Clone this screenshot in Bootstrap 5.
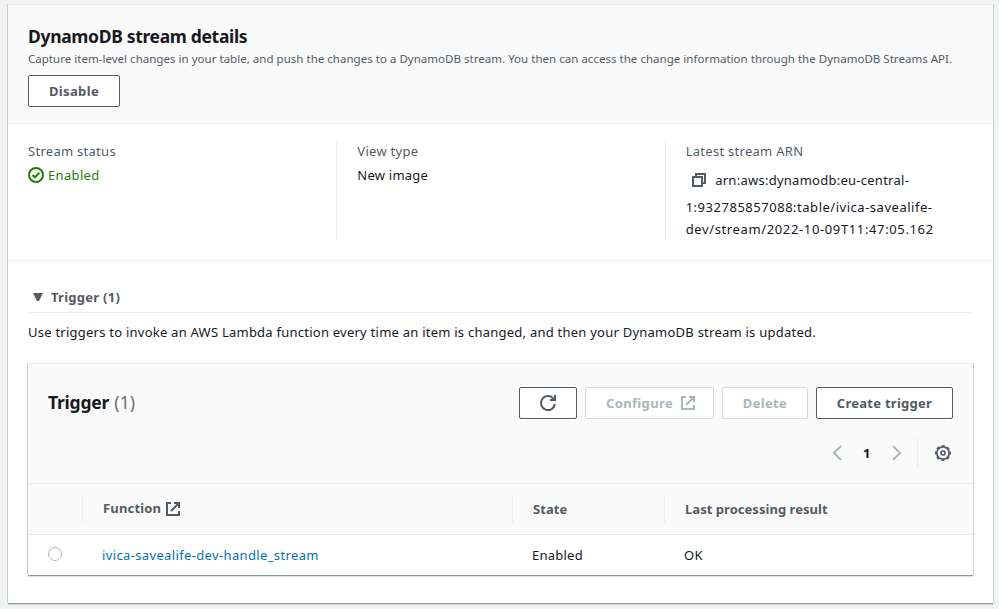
<!DOCTYPE html>
<html lang="en">
<head>
<meta charset="utf-8">
<meta name="viewport" content="width=device-width, initial-scale=1">
<title>DynamoDB stream details</title>
<link href="https://cdn.jsdelivr.net/npm/bootstrap@5.3.0/dist/css/bootstrap.min.css" rel="stylesheet">
<style>
body{background:#f2f3f3;color:#16191f;font-family:"Noto Sans","Open Sans",sans-serif;font-size:13px;line-height:22px;letter-spacing:.24px;padding:4px 6px 5px 8px}
.panel{background:#fff;border-top:1px solid #eaeded;box-shadow:0 1px 0 0 #8d999b,1px 0 0 0 #cdd3d4,-1px 0 0 0 #c9cfd0,0 2px 1px 0 rgba(0,28,36,.12)}
.outer-panel{height:599px}
.panel-head{background:#fafafa;border-bottom:1px solid #eaeded}
.stream-head{height:119px;padding:20px 20px 0}
.title{font-size:17.5px;line-height:22px;font-weight:700;letter-spacing:-.33px;margin:0}
.title .count{font-weight:400;color:#687078;letter-spacing:.1px;margin-left:1px}
.desc{font-size:11.5px;line-height:18px;letter-spacing:.025px;color:#545b64;padding-top:3px;margin-bottom:7px;white-space:nowrap}
.btn-aws{--bs-btn-font-size:13px;--bs-btn-line-height:20px;--bs-btn-font-weight:700;--bs-btn-padding-x:0;--bs-btn-padding-y:5px;--bs-btn-border-radius:2px;--bs-btn-color:#545b64;--bs-btn-bg:#fff;--bs-btn-border-color:#545b64;--bs-btn-hover-color:#16191f;--bs-btn-hover-bg:#fafafa;--bs-btn-hover-border-color:#16191f;--bs-btn-disabled-color:#aab7b8;--bs-btn-disabled-bg:#fff;--bs-btn-disabled-border-color:#d5dbdb;--bs-btn-disabled-opacity:1;height:32px;letter-spacing:.36px}
.w-disable{width:92px}.w-refresh{width:58px}.w-config{width:129px}.w-delete{width:86px}.w-create{width:137px}
.w-create{letter-spacing:.27px}
.w-config{padding-left:2px}
.facts{height:137px;padding:16px 0 20px;border-bottom:1px solid #eaeded}
.fact{padding:0 20px}
.fact + .fact{border-left:1px solid #eaeded}
.fact-label{color:#545b64;letter-spacing:.28px}
.ok-text{color:#1d8102;letter-spacing:.34px}
.fact-value{margin-top:2px}
.arn-line{line-height:32px;margin-top:2px;padding-left:6px}
.arn-a{letter-spacing:.26px;padding-left:1.5px}.arn-b{letter-spacing:.52px}.arn-c{letter-spacing:.63px}
.trigger-area{padding:25px 20px 0}
.expander{height:27px;padding-left:5px;color:#545b64;font-weight:700;border-bottom:1px solid #eaeded;letter-spacing:.27px}
.caret{margin-top:7px}
.hint{margin:8px 0 20px}
.inner-panel{height:212px}
.tool-head{height:120px;padding:23px 20px 0}
.tool-head .title{padding-bottom:2px;letter-spacing:-.24px}
.pager{height:30px;margin-top:19px;padding-right:2px}
.pager .page-now{font-weight:700;color:#16191f;width:8px;margin:0 21px 0 21px}
.gear-wrap{height:30px;border-left:1px solid #eaeded;padding-left:17px;margin-left:15px}
.fn-table{--bs-table-bg:transparent;table-layout:fixed;color:#16191f}
.fn-table th,.fn-table td{padding:0;border:0;vertical-align:middle}
.fn-table th{height:50px;background:#fafafa;color:#545b64;letter-spacing:.04px}
.fn-table thead tr{border-bottom:1px solid #eaeded}
.fn-table td{height:40px;padding:2px 0 0 20px}
.fn-table th > div{height:26px;line-height:27px;padding-left:20px;border-left:1px solid #eaeded}
.fn-table th:first-child > div{border:0}
.fn-table .fn-head{letter-spacing:.17px}
.fn-head svg{margin-left:5px}
.c-pick{width:54px}.c-fn{width:430px}.c-state{width:152px}
.fn-table td:first-child{padding-top:0}
.fn-link{color:#0073bb;text-decoration:none;letter-spacing:.36px}
.fn-table .form-check-input{width:14px;height:14px;margin:0;border-color:#aab7b8;background:#fff}
svg{flex:none;display:block}
</style>
</head>
<body>
<main class="panel outer-panel">
  <header class="panel-head stream-head">
    <h1 class="title">DynamoDB stream details</h1>
    <p class="desc">Capture item-level changes in your table, and push the changes to a DynamoDB stream. You then can access the change information through the DynamoDB Streams API.</p>
    <button class="btn btn-aws w-disable" type="button">Disable</button>
  </header>

  <section class="facts d-flex">
    <div class="fact col-4">
      <div class="fact-label">Stream status</div>
      <div class="fact-value ok-text d-flex align-items-center gap-1">
        <svg width="16" height="16" viewBox="0 0 16 16" fill="none" stroke="#1d8102" stroke-width="2"><circle cx="8" cy="8" r="7"/><path d="M4.500 8 7 10.300 11.300 5.800"/></svg>
        <span>Enabled</span>
      </div>
    </div>
    <div class="fact col-4">
      <div class="fact-label">View type</div>
      <div class="fact-value">New image</div>
    </div>
    <div class="fact col-4">
      <div class="fact-label">Latest stream ARN</div>
      <div class="arn-line d-flex align-items-center">
        <svg class="me-2" width="14" height="14" viewBox="0 0 14 14" fill="none" stroke="#545b64" stroke-width="2"><path d="M1 4h9v9H1zM4 4V1h9v9h-3"/></svg>
        <span class="arn-a">arn:aws:dynamodb:eu-central-</span>
      </div>
      <div class="arn-b">1:932785857088:table/ivica-savealife-</div>
      <div class="arn-c">dev/stream/2022-10-09T11:47:05.162</div>
    </div>
  </section>

  <section class="trigger-area">
    <div class="expander d-flex align-items-start gap-2">
      <svg class="caret" width="10" height="8" viewBox="0 0 10 8"><path d="M0 0h10L6 8H4z" fill="#545b64"/></svg>
      <span>Trigger (1)</span>
    </div>
    <p class="hint">Use triggers to invoke an AWS Lambda function every time an item is changed, and then your DynamoDB stream is updated.</p>

    <div class="panel inner-panel">
      <header class="panel-head tool-head">
        <div class="d-flex align-items-center gap-2">
          <h2 class="title me-auto">Trigger <span class="count">(1)</span></h2>
          <button class="btn btn-aws w-refresh d-flex align-items-center justify-content-center" type="button" aria-label="Refresh">
            <svg width="18" height="18" viewBox="0 0 18 18" fill="none" stroke="#545b64" stroke-width="2"><path d="M15.900 10A7 7 0 1 1 14 4.200l1.800 1.600M16 1v5h-5"/></svg>
          </button>
          <button class="btn btn-aws w-config d-flex align-items-center justify-content-center" type="button" disabled>
            <span class="ms-1 me-2">Configure</span>
            <svg class="me-1" width="14" height="14" viewBox="0 0 14 14" fill="none" stroke="#aab7b8" stroke-width="2"><path d="M5 1H1v12h12V9M8 1h5v5M13 1 5 9"/></svg>
          </button>
          <button class="btn btn-aws w-delete" type="button" disabled>Delete</button>
          <button class="btn btn-aws w-create" type="button">Create trigger</button>
        </div>
        <div class="pager d-flex align-items-center justify-content-end">
          <svg width="10" height="16" viewBox="0 0 10 16" fill="none" stroke="#aab7b8" stroke-width="2"><path d="M9 1 2 8l7 7"/></svg>
          <span class="page-now">1</span>
          <svg width="10" height="16" viewBox="0 0 10 16" fill="none" stroke="#aab7b8" stroke-width="2"><path d="m1 1 7 7-7 7"/></svg>
          <div class="gear-wrap d-flex align-items-center">
            <svg width="16" height="16" viewBox="0 0 16 16" fill="none" stroke="#545b64"><circle cx="8" cy="8" r="6.200" stroke-width="1.700"/><circle cx="8" cy="8" r="7.300" stroke-width="1.400" stroke-dasharray="3.200 2.533" stroke-dashoffset="1.600"/><circle cx="8" cy="8" r="2" stroke-width="1.600"/></svg>
          </div>
        </div>
      </header>
      <table class="table fn-table mb-0">
        <colgroup><col class="c-pick"><col class="c-fn"><col class="c-state"><col></colgroup>
        <thead>
          <tr>
            <th><div></div></th>
            <th><div class="fn-head d-flex align-items-center">Function<svg width="14" height="14" viewBox="0 0 14 14" fill="none" stroke="#545b64" stroke-width="2"><path d="M5 1H1v12h12V9M8 1h5v5M13 1 5 9"/></svg></div></th>
            <th><div>State</div></th>
            <th><div>Last processing result</div></th>
          </tr>
        </thead>
        <tbody>
          <tr>
            <td><input class="form-check-input d-block" type="radio" name="fn" aria-label="Select function"></td>
            <td><a class="fn-link" href="#">ivica-savealife-dev-handle_stream</a></td>
            <td>Enabled</td>
            <td>OK</td>
          </tr>
        </tbody>
      </table>
    </div>
  </section>
</main>
<script src="https://cdn.jsdelivr.net/npm/bootstrap@5.3.0/dist/js/bootstrap.bundle.min.js"></script>
</body>
</html>
